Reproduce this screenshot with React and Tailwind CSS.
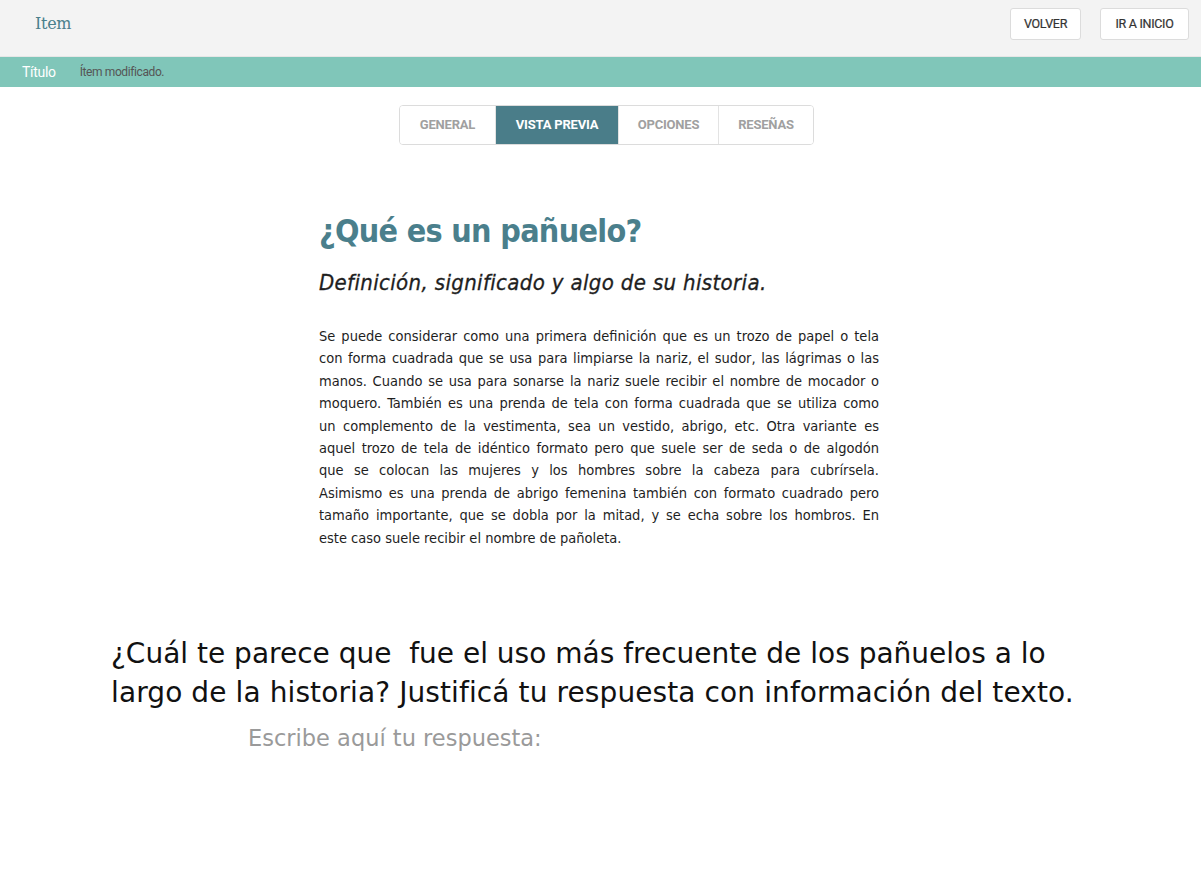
import { useState } from "react";

const tabs = [
  { label: "GENERAL", width: "w-[95px]" },
  { label: "VISTA PREVIA", width: "w-[123px]" },
  { label: "OPCIONES", width: "w-[100px]" },
  { label: "RESEÑAS", width: "w-[95px]" },
];

const paragraph = [
  "Se puede considerar como una primera definición que es un trozo de papel o tela",
  "con forma cuadrada que se usa para limpiarse la nariz, el sudor, las lágrimas o las",
  "manos. Cuando se usa para sonarse la nariz suele recibir el nombre de mocador o",
  "moquero. También es una prenda de tela con forma cuadrada que se utiliza como",
  "un complemento de la vestimenta, sea un vestido, abrigo, etc. Otra variante es",
  "aquel trozo de tela de idéntico formato pero que suele ser de seda o de algodón",
  "que se colocan las mujeres y los hombres sobre la cabeza para cubrírsela.",
  "Asimismo es una prenda de abrigo femenina también con formato cuadrado pero",
  "tamaño importante, que se dobla por la mitad, y se echa sobre los hombros. En",
];

const App = () => {
  const [activeTab, setActiveTab] = useState("VISTA PREVIA");

  return (
    <div className="min-h-screen bg-white font-['Roboto',sans-serif]">
      {/* Header */}
      <header className="h-[57px] bg-[#f3f3f3] flex items-start justify-between pt-[8px] pl-[35px] pr-[12px] border-b border-[#e6e6e6]">
        <span className="font-['DejaVu_Serif',serif] text-[16px] leading-[32px] text-[#4a808c] tracking-[-0.3px]">Item</span>
        <div className="flex items-center gap-[19px]">
          <button className="h-[32px] w-[71px] bg-white border border-[#dcdcdc] rounded-[3px] text-[12.5px] text-[#333] tracking-[-0.3px] [-webkit-text-stroke:0.2px_#333]">
            VOLVER
          </button>
          <button className="h-[32px] w-[89px] bg-white border border-[#dcdcdc] rounded-[3px] text-[12.5px] text-[#333] tracking-[-0.3px] [-webkit-text-stroke:0.2px_#333]">
            IR A INICIO
          </button>
        </div>
      </header>

      {/* Status bar */}
      <div className="h-[30px] bg-[#80c6b9] flex items-center pl-[22px] gap-[24px]">
        <span className="text-[14px] text-white tracking-[-0.3px]">Título</span>
        <span className="text-[12px] text-[#555] tracking-[-0.4px]">Ítem modificado.</span>
      </div>

      {/* Tabs */}
      <div className="flex justify-center pt-[18px] pl-[12px]">
        <div className="flex h-[40px] border border-[#dcdcdc] rounded-[4px] overflow-hidden">
          {tabs.map((tab, i) => (
            <button
              key={tab.label}
              onClick={() => setActiveTab(tab.label)}
              className={`${tab.width} text-[13px] font-bold tracking-[-0.2px] ${
                i > 0 ? "border-l border-[#e3e3e3]" : ""
              } ${activeTab === tab.label ? "bg-[#4a7d89] text-white" : "bg-white text-[#a0a0a0]"}`}
            >
              {tab.label}
            </button>
          ))}
        </div>
      </div>

      {/* Preview content */}
      <div className="w-[560px] ml-[319px] pt-[62px] font-['DejaVu_Sans_Condensed','DejaVu_Sans',sans-serif]">
        <h1 className="text-[32px] leading-[48px] font-bold text-[#4a7f8c] tracking-[-0.7px]">¿Qué es un pañuelo?</h1>
        <h2 className="mt-[13px] text-[22px] leading-[30px] italic text-[#1e1e1e] tracking-[0.35px] [-webkit-text-stroke:0.3px_#1e1e1e]">
          Definición, significado y algo de su historia.
        </h2>
        <div className="mt-[27px] text-[14.5px] leading-[22.4px] text-[#1e1e1e]">
          {paragraph.map((line) => (
            <p key={line} className="text-justify [text-align-last:justify] whitespace-nowrap">
              {line}
            </p>
          ))}
          <p>este caso suele recibir el nombre de pañoleta.</p>
        </div>
      </div>

      {/* Question */}
      <div className="pl-[111px] pt-[85px] font-['DejaVu_Sans',sans-serif] text-[#111]">
        <p className="text-[28px] leading-[39px] whitespace-pre">
          {"¿Cuál te parece que  fue el uso más frecuente de los pañuelos a lo"}
        </p>
        <p className="text-[28px] leading-[39px] whitespace-pre tracking-[0.1px]">
          {"largo de la historia? Justificá tu respuesta con información del texto."}
        </p>
        <p className="ml-[137px] mt-[10px] text-[22.5px] leading-[32px] text-[#9a9a9a]">Escribe aquí tu respuesta:</p>
      </div>
    </div>
  );
};

export default App;
